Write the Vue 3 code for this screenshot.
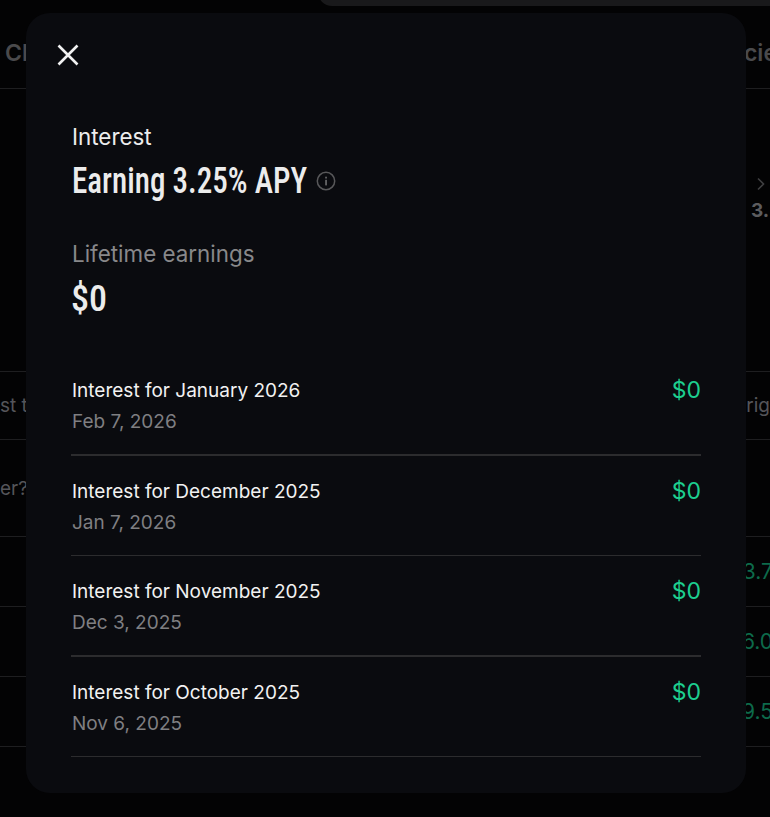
<script setup>
const records = [
  { title: 'Interest for January 2026', date: 'Feb 7, 2026', amount: '$0', strong: true },
  { title: 'Interest for December 2025', date: 'Jan 7, 2026', amount: '$0', strong: false },
  { title: 'Interest for November 2025', date: 'Dec 3, 2025', amount: '$0', strong: true },
  { title: 'Interest for October 2025', date: 'Nov 6, 2025', amount: '$0', strong: false }
];

const backdropRows = [
  { left: 'st tr', right: 'rig', height: 68, tone: 'grey' },
  { left: 'er?', right: '', height: 97, tone: 'grey' },
  { left: '', right: '3.7', height: 70, tone: 'green' },
  { left: '', right: '6.0', height: 70, tone: 'green' },
  { left: '', right: '9.5', height: 71, tone: 'green' }
];
</script>

<template>
  <div class="page">
    <!-- 背景頁面 -->
    <div class="backdrop">
      <div class="top-pill"></div>
      <div class="head-row">
        <span>Cl</span>
        <span>cie</span>
      </div>
      <div class="summary-row">
        <div class="summary-side">
          <svg class="chevron" width="10" height="14" viewBox="0 0 10 14">
            <path d="M2 1.5 7.5 7 2 12.5" fill="none" stroke="#3f3f41" stroke-width="1.6" />
          </svg>
          <span class="summary-value">3.</span>
        </div>
      </div>
      <div
        v-for="row in backdropRows"
        :key="row.left + row.right"
        class="bg-row"
        :class="row.tone"
        :style="{ height: row.height + 'px' }"
      >
        <span>{{ row.left }}</span>
        <span>{{ row.right }}</span>
      </div>
    </div>

    <!-- 彈窗 -->
    <section class="modal">
      <button class="close" type="button" aria-label="Close">
        <svg width="24" height="24" viewBox="0 0 24 24">
          <path d="M2.5 2.5 21.5 21.5M21.5 2.5 2.5 21.5" fill="none" stroke="#f1f1f1" stroke-width="2.6" />
        </svg>
      </button>

      <div class="label">Interest</div>
      <div class="headline">
        <h1>Earning 3.25% APY</h1>
        <svg class="info" width="20" height="20" viewBox="0 0 20 20">
          <circle cx="10" cy="10" r="8.7" fill="none" stroke="#58585a" stroke-width="1.5" />
          <rect x="9.2" y="8.8" width="1.7" height="5.6" fill="#6a6a6c" />
          <rect x="9.2" y="5.7" width="1.7" height="1.8" fill="#6a6a6c" />
        </svg>
      </div>

      <div class="label muted">Lifetime earnings</div>
      <div class="total">$0</div>

      <ul class="records">
        <li v-for="item in records" :key="item.title" class="record" :class="{ strong: item.strong }">
          <div class="record-text">
            <div class="record-title">{{ item.title }}</div>
            <div class="record-date">{{ item.date }}</div>
          </div>
          <div class="record-amount">{{ item.amount }}</div>
        </li>
      </ul>
    </section>
  </div>
</template>

<style>
html,
body {
  background: #030304;
}
</style>

<style scoped>
.page {
  position: relative;
  width: 770px;
  height: 817px;
  overflow: hidden;
  background: #030304;
  font-family: Inter, "Noto Sans", sans-serif;
}

.top-pill {
  height: 20px;
  margin-top: -14px;
  margin-left: 318px;
  background: #19191b;
  border-bottom-left-radius: 14px;
}

.head-row {
  height: 83px;
  padding-top: 33px;
  box-sizing: border-box;
  display: flex;
  justify-content: space-between;
  font-size: 23px;
  font-weight: 600;
  color: #4a4a4c;
  border-bottom: 1px solid #1e1e20;
  padding-left: 5px;
}

.head-row span:last-child {
  margin-right: -7px;
}

.summary-row {
  height: 282px;
  display: flex;
  justify-content: flex-end;
}

.summary-side {
  width: 19px;
  padding-top: 88px;
  box-sizing: border-box;
}

.chevron {
  display: block;
  margin-left: 5px;
}

.summary-value {
  display: block;
  margin-top: 8px;
  font-size: 19px;
  font-weight: 700;
  color: #5c5c5e;
}

.bg-row {
  display: flex;
  justify-content: space-between;
  align-items: center;
  box-sizing: border-box;
  border-top: 1px solid #1e1e20;
  font-size: 19px;
}

.bg-row:last-child {
  border-bottom: 1px solid #1e1e20;
}

.bg-row.grey {
  color: #55555a;
}

.bg-row.green {
  font-size: 21px;
  color: #0d6a4b;
}

.bg-row.green span:last-child {
  margin-right: -3px;
}

.modal {
  position: absolute;
  left: 26px;
  top: 13px;
  width: 720px;
  height: 780px;
  box-sizing: border-box;
  padding: 30px 45px 0;
  background: #0a0b0f;
  border-radius: 24px;
}

.close {
  display: block;
  width: 24px;
  height: 24px;
  margin-left: -15px;
  padding: 0;
  border: 0;
  background: none;
}

.close svg {
  display: block;
}

.label {
  margin-top: 56px;
  margin-left: 1px;
  font-size: 22.4px;
  line-height: 28px;
  color: #ededed;
}

.label.muted {
  margin-top: 38px;
  color: #88888a;
}

.headline {
  display: flex;
  align-items: center;
  gap: 8px;
  margin-top: 9px;
  margin-left: 1px;
}

h1,
.total {
  font-family: Roboto, "Open Sans", sans-serif;
  font-stretch: 75%;
  font-size: 37px;
  line-height: 42px;
  font-weight: 500;
  color: #ececec;
}

/* 比 Roboto 最窄的寬度還要窄，再壓一點 */
h1 {
  margin: 0 -44px 0 0;
  transform: scaleX(0.84);
  transform-origin: left center;
}

.total {
  margin-top: 10px;
  font-size: 36px;
}

.records {
  list-style: none;
  margin: 35px 0 0;
  padding: 0;
}

.record {
  display: flex;
  justify-content: space-between;
  height: 100.5px;
  padding-top: 21px;
  box-sizing: border-box;
  border-bottom: 1px solid #2c2c2e;
}

.record.strong {
  border-bottom-width: 2px;
}

.record-text {
  margin-left: 1px;
}

.record-title {
  padding-top: 1px;
  font-size: 19px;
  line-height: 28px;
  color: #f2f2f2;
}

.record-date {
  margin-top: 3px;
  font-size: 19px;
  line-height: 28px;
  color: #7f7f82;
}

.record-amount {
  font-size: 23px;
  line-height: 28px;
  color: #1dcf8f;
}
</style>
